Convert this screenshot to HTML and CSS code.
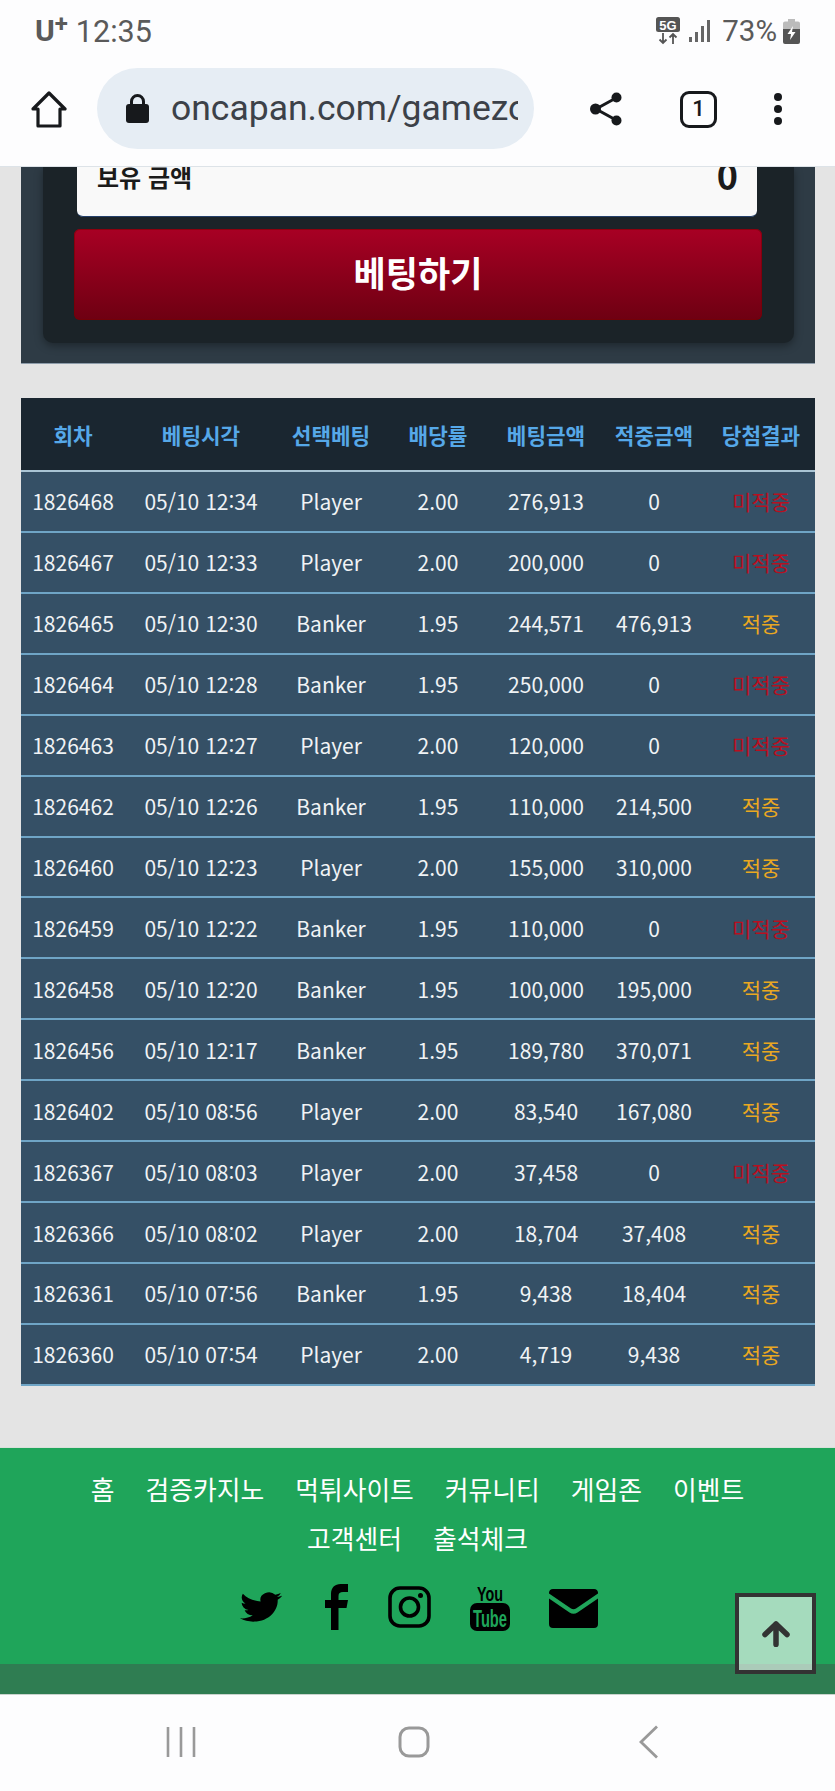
FILE: index.html
```html
<!DOCTYPE html>
<html lang="ko">
<head>
  <meta charset="UTF-8" />
  <meta name="viewport" content="width=device-width, initial-scale=1.0"/>
  <title>oncapan.com</title>
  <link rel="stylesheet" href="styles.css">
</head>
<body>

  <header class="chrome">
    <div class="status">
      <div class="status-left">
        <span class="carrier">U<sup>+</sup></span>
        <span>12:35</span>
      </div>
      <div class="status-right">
        <svg class="ico-5g" viewBox="0 0 24 28" width="24" height="28">
          <rect x="0" y="0" width="24" height="15" rx="2.5" fill="#555"/>
          <text x="12" y="12.5" text-anchor="middle" class="ico-5g-text">5G</text>
          <path d="M7 16v10M3.500 22.500 7 26l3.500-3.500M17 27V17M13.500 20.500 17 17l3.500 3.500" fill="none" stroke="#555" stroke-width="1.800"/>
        </svg>
        <svg class="ico-signal" viewBox="0 0 22 24" width="22" height="24">
          <rect x="0" y="18" width="3" height="5" fill="#666"/>
          <rect x="6" y="13" width="3" height="10" fill="#666"/>
          <rect x="12" y="7" width="3" height="16" fill="#666"/>
          <rect x="18" y="1" width="3" height="22" fill="#666"/>
        </svg>
        <span class="pct">73%</span>
        <svg class="ico-batt" viewBox="0 0 17 25" width="17" height="25">
          <path d="M5 0h7v2.500h3a2 2 0 0 1 2 2V10H0V4.500a2 2 0 0 1 2-2h3z" fill="#bbb"/>
          <path d="M0 10h17v13a2 2 0 0 1-2 2H2a2 2 0 0 1-2-2z" fill="#555"/>
          <path d="M10 7 4.500 15h3.500l-1 6 5.500-8H9z" fill="#fff"/>
        </svg>
      </div>
    </div>
    <div class="toolbar">
      <svg class="ico-home" viewBox="0 0 36 37" width="36" height="37">
        <path d="M2 18 18 2l16 16h-5v17H7V18z" fill="none" stroke="#17191c" stroke-width="3.200" stroke-linejoin="round"/>
      </svg>
      <div class="url-pill">
        <svg class="ico-lock" viewBox="0 0 23 29" width="23" height="29">
          <path d="M5.500 11V7.500a6 6 0 0 1 12 0V11" fill="none" stroke="#17191c" stroke-width="3"/>
          <rect x="0" y="10" width="23" height="19" rx="3" fill="#17191c"/>
        </svg>
        <div class="url-text">oncapan.com/gamezone</div>
      </div>
      <svg class="ico-share" viewBox="0 0 33 34" width="33" height="34">
        <path d="M26 6 6 17l20 11" fill="none" stroke="#17191c" stroke-width="3"/>
        <circle cx="26.500" cy="5.500" r="5" fill="#17191c"/>
        <circle cx="5.500" cy="17" r="5.500" fill="#17191c"/>
        <circle cx="26.500" cy="28.500" r="5" fill="#17191c"/>
      </svg>
      <div class="tab-count">1</div>
      <div class="dots"><i></i><i></i><i></i></div>
    </div>
  </header>

  <main class="page">
    <section class="bet-panel">
      <div class="bet-inner">
        <div class="balance">
          <span class="balance-label">보유 금액</span>
          <span class="balance-value">0</span>
        </div>
        <button class="bet-btn">베팅하기</button>
      </div>
    </section>

    <table class="history">
      <colgroup>
        <col class="c-round"><col class="c-time"><col class="c-pick"><col class="c-odds"><col class="c-amt"><col class="c-win"><col class="c-res">
      </colgroup>
      <thead>
        <tr>
          <th>회차</th><th>베팅시각</th><th>선택베팅</th><th>배당률</th><th>베팅금액</th><th>적중금액</th><th>당첨결과</th>
        </tr>
      </thead>
      <tbody id="rows"></tbody>
    </table>
  </main>

  <footer class="site-foot">
    <div class="foot-main">
      <ul class="foot-links">
        <li>홈</li><li>검증카지노</li><li>먹튀사이트</li><li>커뮤니티</li><li>게임존</li><li>이벤트</li><li>고객센터</li><li>출석체크</li>
      </ul>
      <div class="foot-icons">
        <svg viewBox="0 0 24 24" width="42" height="36" preserveAspectRatio="none">
          <path d="M23.953 4.570a10 10 0 0 1-2.825.775 4.958 4.958 0 0 0 2.163-2.723c-.951.555-2.005.959-3.127 1.184a4.920 4.920 0 0 0-8.384 4.482C7.690 8.095 4.067 6.130 1.640 3.162a4.822 4.822 0 0 0-.666 2.475c0 1.710.870 3.213 2.188 4.096a4.904 4.904 0 0 1-2.228-.616v.060a4.923 4.923 0 0 0 3.946 4.827 4.996 4.996 0 0 1-2.212.085 4.936 4.936 0 0 0 4.604 3.417 9.867 9.867 0 0 1-6.102 2.105c-.390 0-.779-.023-1.170-.067a13.995 13.995 0 0 0 7.557 2.209c9.053 0 13.998-7.496 13.998-13.985 0-.210 0-.420-.015-.630A9.935 9.935 0 0 0 24 4.590z"/>
        </svg>
        <svg class="ico-fb" viewBox="0 0 23 46" width="23" height="46">
          <path d="M6 46V24H0v-8h6v-6C6 3.500 10 0 15.500 0H23v8h-5c-3 0-4.500 1-4.500 4v4H23l-1.500 8h-8v22z"/>
        </svg>
        <svg class="ico-insta" viewBox="0 0 43 42" width="43" height="42">
          <rect x="2" y="2" width="39" height="38" rx="10" fill="none" stroke="#000" stroke-width="3.600"/>
          <circle cx="21.500" cy="21" r="9" fill="none" stroke="#000" stroke-width="3.600"/>
          <circle cx="32.500" cy="9.500" r="2.500"/>
        </svg>
        <svg viewBox="0 0 40 49" width="40" height="49">
          <text x="20" y="18.500" text-anchor="middle" textLength="26" lengthAdjust="spacingAndGlyphs" class="yt-you">You</text>
          <rect x="0" y="21" width="40" height="28" rx="7"/>
          <text x="20" y="44.500" text-anchor="middle" textLength="34" lengthAdjust="spacingAndGlyphs" class="yt-tube">Tube</text>
        </svg>
        <svg class="ico-mail" viewBox="0 0 49 39" width="49" height="39">
          <path d="M4 0h41a4 4 0 0 1 4 3.500v1L27 19.500c-1.500 1-3.500 1-5 0L0 4.500v-1A4 4 0 0 1 4 0z"/>
          <path d="M0 9.500 20.500 23.500c2.500 1.700 5.500 1.700 8 0L49 9.500V35a4 4 0 0 1-4 4H4a4 4 0 0 1-4-4z"/>
        </svg>
      </div>
    </div>
    <div class="foot-strip"></div>
  </footer>

  <nav class="softkeys">
    <svg viewBox="0 0 30 32" width="30" height="32">
      <path d="M2 1v30M15 1v30M28 1v30" stroke="#999" stroke-width="2.600" fill="none"/>
    </svg>
    <svg viewBox="0 0 32 32" width="32" height="32">
      <rect x="2" y="2" width="28" height="28" rx="9" fill="none" stroke="#999" stroke-width="3"/>
    </svg>
    <svg viewBox="0 0 20 34" width="20" height="34">
      <path d="M18 1.500 2 17l16 15.500" fill="none" stroke="#999" stroke-width="2.800"/>
    </svg>
  </nav>

  <a class="to-top" href="#">
    <svg viewBox="0 0 28 26" width="28" height="26">
      <path d="M14 23.500V3M3 13.500 14 3l11 10.500" fill="none" stroke="#333" stroke-width="5.500" stroke-linecap="round" stroke-linejoin="round"/>
    </svg>
  </a>

  <script>
    const data = [
      ['1826468', '05/10 12:34', 'Player', '2.00', '276,913', '0', 0],
      ['1826467', '05/10 12:33', 'Player', '2.00', '200,000', '0', 0],
      ['1826465', '05/10 12:30', 'Banker', '1.95', '244,571', '476,913', 1],
      ['1826464', '05/10 12:28', 'Banker', '1.95', '250,000', '0', 0],
      ['1826463', '05/10 12:27', 'Player', '2.00', '120,000', '0', 0],
      ['1826462', '05/10 12:26', 'Banker', '1.95', '110,000', '214,500', 1],
      ['1826460', '05/10 12:23', 'Player', '2.00', '155,000', '310,000', 1],
      ['1826459', '05/10 12:22', 'Banker', '1.95', '110,000', '0', 0],
      ['1826458', '05/10 12:20', 'Banker', '1.95', '100,000', '195,000', 1],
      ['1826456', '05/10 12:17', 'Banker', '1.95', '189,780', '370,071', 1],
      ['1826402', '05/10 08:56', 'Player', '2.00', '83,540', '167,080', 1],
      ['1826367', '05/10 08:03', 'Player', '2.00', '37,458', '0', 0],
      ['1826366', '05/10 08:02', 'Player', '2.00', '18,704', '37,408', 1],
      ['1826361', '05/10 07:56', 'Banker', '1.95', '9,438', '18,404', 1],
      ['1826360', '05/10 07:54', 'Player', '2.00', '4,719', '9,438', 1]
    ];

    document.getElementById('rows').innerHTML = data.map(r => {
      const cells = r.slice(0, 6).map(v => `<td>${v}</td>`).join('');
      const result = r[6] ? '<td class="hit">적중</td>' : '<td class="miss">미적중</td>';
      return `<tr>${cells}${result}</tr>`;
    }).join('');
  </script>
</body>
</html>
```

FILE: styles.css
```css
* {margin:0; padding:0; box-sizing:border-box;}
html, body {width: 835px; height: 1791px; overflow: hidden;}
body {
  position: relative;
  font-family: "Noto Sans CJK KR", "Noto Sans", sans-serif;
  background: #e4e4e4;
  display: flex;
  flex-direction: column;
}

/* browser chrome */
.chrome {
  height: 167px;
  flex: none;
  background: #fdfdfe;
  border-bottom: 1px solid #dde3e8;
  font-family: Roboto, sans-serif;
}

.status {
  height: 62px;
  padding: 0 35px 0 35px;
  display: flex;
  justify-content: space-between;
  align-items: center;
  color: #5a5a5a;
  font-size: 30.500px;
}

.status-left {display: flex; align-items: center; gap: 8px;}
.carrier {font-weight: 700; font-size: 30px; line-height: 1;}
.carrier sup {font-size: 24px; vertical-align: 9px; line-height: 0;}

.status-right {display: flex; align-items: center;}
.ico-5g {margin-right: 9px;}
.ico-5g-text {font: 700 13px "Liberation Sans", sans-serif; fill: #fff;}
.ico-signal {margin-right: 11px;}
.pct {font-size: 29.500px; margin-right: 6px;}

.toolbar {
  height: 104px;
  display: flex;
  align-items: center;
  padding: 0 0 12px 31px;
}

.ico-home {flex: none; margin-top: 2px;}

.url-pill {
  width: 437px;
  height: 81px;
  margin-left: 30px;
  flex: none;
  border-radius: 41px;
  background: #e6edf4;
  display: flex;
  align-items: center;
  padding-left: 29px;
}

.url-text {
  width: 347px;
  margin-left: 22px;
  overflow: hidden;
  white-space: nowrap;
  font-size: 35.500px;
  color: #3c4148;
}

.ico-share {flex: none; margin-left: 56px; margin-top: 2px;}

.tab-count {
  flex: none;
  width: 37px;
  height: 37px;
  margin-left: 57px;
  margin-top: 2px;
  border: 3.5px solid #17191c;
  border-radius: 9px;
  font-size: 22px;
  font-weight: 500;
  line-height: 30px;
  text-align: center;
  color: #17191c;
}

.dots {
  flex: none;
  margin-left: 57px;
  margin-top: 2px;
  display: flex;
  flex-direction: column;
  gap: 4px;
}

.dots i {display: block; width: 8px; height: 8px; border-radius: 50%; background: #17191c;}

/* page content */
.page {
  flex: none;
  height: 1280px;
  padding: 0 20px 0 21px;
  overflow: hidden;
}

.bet-panel {
  height: 197px;
  padding: 0 21px 0 22px;
  background: #2e3b45;
  border-bottom: 1px solid #8d9caa;
}

.bet-inner {
  height: 176px;
  padding: 0 32px 0 31px;
  background: #1b2328;
  border-radius: 0 0 10px 10px;
  box-shadow: 0 3px 8px rgba(0,0,0,0.35);
}

.balance {
  height: 50px;
  margin: 0 5px 0 3px;
  padding: 0 19px 27px 20px;
  display: flex;
  justify-content: space-between;
  align-items: flex-end;
  background: #f9f9f9;
  border-bottom: 1px solid #24406a;
  border-radius: 0 0 6px 6px;
  color: #1b1b1b;
  font-weight: 700;
}

.balance-label {font-size: 24px; line-height: 24px;}
.balance-value {font-size: 36px; line-height: 24px; margin-bottom: 3px;}

.bet-btn {
  display: block;
  width: 100%;
  height: 91px;
  margin-top: 12px;
  padding-bottom: 7px;
  border: none;
  border-radius: 6px;
  background: linear-gradient(#a80024, #6e0012);
  box-shadow: inset 0 0 0 1px rgba(120,0,0,0.6);
  color: #fff;
  font-family: inherit;
  font-size: 35px;
  font-weight: 700;
}

.history {
  width: 794px;
  margin-top: 34px;
  table-layout: fixed;
  border-collapse: collapse;
  text-align: center;
}

.c-round {width: 104px;}
.c-time {width: 152px;}
.c-pick {width: 108px;}
.c-odds {width: 106px;}
.c-amt {width: 110px;}
.c-win {width: 106px;}
.c-res {width: 108px;}

.history th {
  height: 73px;
  background: #1a2630;
  border-bottom: 2px solid #a9c4d4;
  color: #56a8e8;
  font-size: 21.300px;
  font-weight: 700;
}

.history td {
  height: 60.930px;
  background: #355066;
  border-bottom: 2px solid #6fa5c6;
  color: #f0f3f5;
  font-size: 21px;
}

.history td.hit {color: #eaa821;}
.history td.miss {color: #b80f20;}

/* footer */
.site-foot {flex: none; height: 247px; display: flex; flex-direction: column; border-top: 1px solid #d8e0da;}

.foot-main {
  height: 216px;
  background: #1fa55a;
  padding-top: 17px;
}

.foot-links {
  list-style: none;
  width: 700px;
  margin: 0 auto;
  display: flex;
  flex-wrap: wrap;
  justify-content: center;
  column-gap: 31px;
  color: #fff;
  font-size: 25.800px;
  line-height: 48.500px;
}

.foot-icons {
  margin-top: 20px;
  height: 49px;
  padding-left: 3px;
  display: flex;
  justify-content: center;
  align-items: center;
  gap: 39px;
}

.ico-fb {margin-left: 4px;}
.ico-insta {margin-left: 1px;}
.ico-mail {margin-top: 4px;}

.yt-you {font: 700 21px "Liberation Sans", sans-serif;}
.yt-tube {font: 700 24px "Liberation Sans", sans-serif; fill: #1fa55a;}

.foot-strip {height: 30px; background: #2f7d52;}

.softkeys {
  flex: 1;
  background: #fdfdfe;
  border-top: 1px solid #c9d3cd;
  display: grid;
  grid-template-columns: 232px 241px auto;
  justify-content: start;
  align-items: center;
  justify-items: start;
  padding-left: 166px;
  padding-bottom: 2px;
}

.to-top {
  position: absolute;
  left: 735px;
  top: 1593px;
  width: 81px;
  height: 81px;
  border: 4px solid #333;
  background: rgba(255,255,255,0.6);
  display: flex;
  align-items: center;
  justify-content: center;
}
```
